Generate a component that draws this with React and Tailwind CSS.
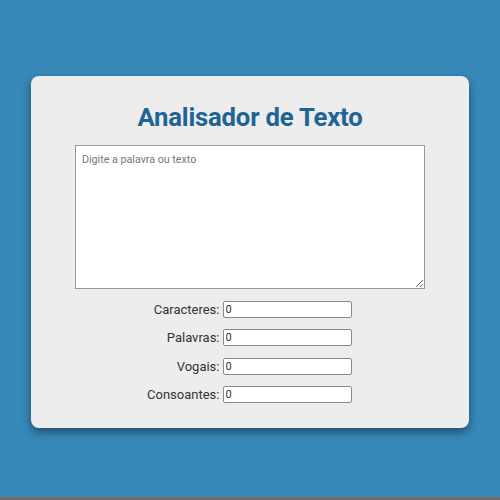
export default function App() {
  const rows = ["Caracteres", "Palavras", "Vogais", "Consoantes"];
  return (
    <div className="w-[500px] h-[500px] bg-[#3789b9] flex flex-col" style={{ fontFamily: "Roboto, sans-serif" }}>
      <div className="flex-1 flex justify-center pt-[76px]">
        <div className="w-[438px] h-[352px] bg-[#ededed] rounded-[8px] shadow-[0_4px_10px_rgba(0,0,0,0.45)] flex flex-col items-center">
          <h1 className="mt-[24px] text-[25.7px] leading-[34px] font-bold text-[#1e6494] tracking-[-0.2px]">Analisador de Texto</h1>
          <textarea
            placeholder="Digite a palavra ou texto"
            className="mt-[11px] w-[350px] h-[144px] bg-white border border-[#9a9a9a] px-[6px] py-[6px] text-[10.7px] text-[#444] placeholder:text-[#777] resize outline-none"
            style={{ fontFamily: "Roboto, sans-serif" }}
          />
          <div className="mt-[12px] grid grid-cols-[148px_130px] gap-y-[11.3px] gap-x-[3px] ml-[-76px] items-center">
            {rows.map((r) => (
              <div key={r} className="contents">
                <label className="text-right text-[13px] leading-[17px] text-[#333]">{r}:</label>
                <input
                  readOnly
                  value="0"
                  className="w-[129px] h-[17px] bg-white border border-[#8a8a8a] rounded-[2px] px-[2px] text-[11px] text-[#333] outline-none"
                  style={{ fontFamily: "Roboto, sans-serif" }}
                />
              </div>
            ))}
          </div>
        </div>
      </div>
      <div className="h-[3px] bg-[#7a6a66]" />
    </div>
  );
}
